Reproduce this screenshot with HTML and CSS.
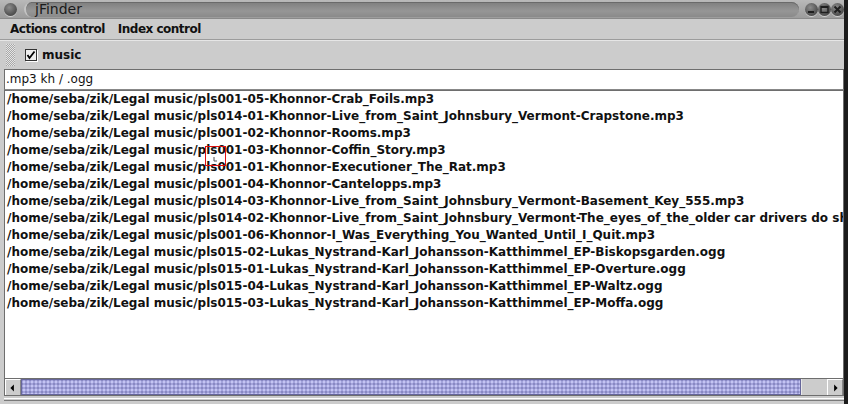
FILE: index.html
```html
<!DOCTYPE html>
<html>
<head>
<meta charset="utf-8">
<title>jFinder</title>
<link rel="stylesheet" href="styles.css">
</head>
<body>
<div class="window">
  <div class="titlebar">
    <span class="orb orb-menu"></span>
    <div class="title-pill"><span class="title-text">jFinder</span></div>
    <div class="controls">
      <span class="orb"><svg width="13" height="13" viewBox="0 0 13 13"><rect x="3" y="8" width="6" height="2" fill="#1e1e1e"/></svg></span>
      <span class="orb"><svg width="13" height="13" viewBox="0 0 13 13"><rect x="3" y="3.5" width="7" height="6" fill="none" stroke="#1e1e1e" stroke-width="1.4"/><rect x="3" y="3" width="7" height="2" fill="#1e1e1e"/></svg></span>
      <span class="orb"><svg width="13" height="13" viewBox="0 0 13 13"><path d="M3.5 3.5 L9.5 9.5 M9.5 3.5 L3.5 9.5" stroke="#1e1e1e" stroke-width="2"/></svg></span>
    </div>
  </div>
  <div class="menubar">
    <span class="menu-item">Actions control</span>
    <span class="menu-item">Index control</span>
  </div>
  <div class="toolbar">
    <span class="grip"></span>
    <label class="check">
      <span class="box"><svg width="10" height="10" viewBox="0 0 10 10"><path d="M1.5 5 L3.5 8 L8.5 1.5" fill="none" stroke="#000" stroke-width="1.8"/></svg></span>
      <span class="check-label">music</span>
    </label>
  </div>
  <div class="content">
    <div class="field">.mp3 kh / .ogg</div>
    <div class="listpane">
      <div class="list">
        <div class="row">/home/seba/zik/Legal music/pls001-05-Khonnor-Crab_Foils.mp3</div>
        <div class="row">/home/seba/zik/Legal music/pls014-01-Khonnor-Live_from_Saint_Johnsbury_Vermont-Crapstone.mp3</div>
        <div class="row">/home/seba/zik/Legal music/pls001-02-Khonnor-Rooms.mp3</div>
        <div class="row">/home/seba/zik/Legal music/pls001-03-Khonnor-Coffin_Story.mp3</div>
        <div class="row">/home/seba/zik/Legal music/pls001-01-Khonnor-Executioner_The_Rat.mp3</div>
        <div class="row">/home/seba/zik/Legal music/pls001-04-Khonnor-Cantelopps.mp3</div>
        <div class="row">/home/seba/zik/Legal music/pls014-03-Khonnor-Live_from_Saint_Johnsbury_Vermont-Basement_Key_555.mp3</div>
        <div class="row">/home/seba/zik/Legal music/pls014-02-Khonnor-Live_from_Saint_Johnsbury_Vermont-The_eyes_of_the_older car drivers do shine.mp3</div>
        <div class="row">/home/seba/zik/Legal music/pls001-06-Khonnor-I_Was_Everything_You_Wanted_Until_I_Quit.mp3</div>
        <div class="row">/home/seba/zik/Legal music/pls015-02-Lukas_Nystrand-Karl_Johansson-Katthimmel_EP-Biskopsgarden.ogg</div>
        <div class="row">/home/seba/zik/Legal music/pls015-01-Lukas_Nystrand-Karl_Johansson-Katthimmel_EP-Overture.ogg</div>
        <div class="row">/home/seba/zik/Legal music/pls015-04-Lukas_Nystrand-Karl_Johansson-Katthimmel_EP-Waltz.ogg</div>
        <div class="row">/home/seba/zik/Legal music/pls015-03-Lukas_Nystrand-Karl_Johansson-Katthimmel_EP-Moffa.ogg</div>
      </div>
      <div class="hscroll">
        <span class="sbtn"><svg width="16" height="16" viewBox="0 0 16 16"><path d="M5 8 L9 4 L9 12 Z" fill="#000"/></svg></span>
        <span class="thumb"></span>
        <span class="track"></span>
        <span class="sbtn"><svg width="16" height="16" viewBox="0 0 16 16"><path d="M11 8 L7 4 L7 12 Z" fill="#000"/></svg></span>
      </div>
    </div>
    <div class="bottom"></div>
  </div>
  <div class="highlight"><svg width="6" height="6" viewBox="0 0 6 6"><path d="M1 0 L1 4 L4 4" fill="none" stroke="#555" stroke-width="1"/></svg></div>
</div>
</body>
</html>
```
FILE: styles.css
```css
* { box-sizing: border-box; }
html, body { margin: 0; padding: 0; }
body {
  width: 848px;
  height: 404px;
  overflow: hidden;
  background: #cccccc;
  font-family: "DejaVu Sans", "Liberation Sans", sans-serif;
}
.window {
  position: relative;
  width: 848px;
  height: 404px;
  display: flex;
  flex-direction: column;
  background: #cccccc;
  border-right: 4px solid #1c1c1c;
}
.titlebar {
  height: 19px;
  display: flex;
  align-items: center;
  padding: 0 0 0 4px;
  background: linear-gradient(#b9b9b9, #9c9c9c);
  border-bottom: 1px solid #8a8a8a;
  flex: none;
}
.orb {
  width: 13px;
  height: 13px;
  border-radius: 50%;
  background: radial-gradient(circle at 40% 35%, #8c8c8c, #555 60%, #3a3a3a);
  box-shadow: 0 1px 0 #d0d0d0;
  display: inline-flex;
  flex: none;
}
.orb-menu { margin-right: 7px; }
.title-pill {
  flex: 1;
  height: 15px;
  border-radius: 8px;
  background: linear-gradient(#7e7e7e, #969696 60%, #8a8a8a);
  border-left: 2px solid #c4c4c4;
  box-shadow: inset 0 1px 0 #6a6a6a;
  display: flex;
  align-items: center;
  padding-left: 9px;
}
.title-text {
  font-size: 14px;
  color: #1a1a1a;
  line-height: 15px;
}
.controls {
  display: flex;
  padding: 0 0 0 6px;
}
.menubar {
  height: 21px;
  flex: none;
  display: flex;
  align-items: center;
  gap: 13px;
  padding-left: 10px;
  border-bottom: 1px solid #9c9c9c;
  font-weight: bold;
  font-size: 12px;
  letter-spacing: -0.5px;
  color: #111;
}
.toolbar {
  height: 29px;
  flex: none;
  display: flex;
  align-items: center;
  padding-left: 6px;
  border-top: 1px solid #e6e6e6;
}
.grip {
  width: 9px;
  height: 22px;
  background-image: conic-gradient(#a8a8a8 25%, #e4e4e4 0 50%, #a8a8a8 0 75%, #e4e4e4 0);
  background-size: 2px 2px;
  margin-right: 10px;
}
.check {
  display: flex;
  align-items: center;
  gap: 5px;
}
.box {
  width: 12px;
  height: 12px;
  background: #eeeeee;
  border: 1px solid #333;
  box-shadow: 1px 1px 0 #ffffff;
  display: flex;
  align-items: center;
  justify-content: center;
}
.check-label {
  font-weight: bold;
  font-size: 12px;
  color: #111;
}
.content {
  flex: 1;
  display: flex;
  flex-direction: column;
  padding: 0 0 0 4px;
  min-height: 0;
}
.field {
  height: 21px;
  flex: none;
  background: #ffffff;
  border: 1px solid #6e6e6e;
  border-bottom-color: #888;
  padding-left: 1px;
  font-size: 12px;
  line-height: 18px;
  color: #111;
  white-space: nowrap;
}
.listpane {
  flex: 1;
  display: flex;
  flex-direction: column;
  border: 1px solid #6e6e6e;
  min-height: 0;
}
.list {
  flex: 1;
  background: #ffffff;
  overflow: hidden;
  padding-left: 2px;
}
.row {
  height: 17px;
  line-height: 17px;
  font-weight: bold;
  font-size: 12px;
  color: #111;
  white-space: nowrap;
}
.hscroll {
  height: 17px;
  flex: none;
  display: flex;
  border-top: 1px solid #6e6e6e;
  background: #cccccc;
}
.sbtn {
  width: 16px;
  height: 16px;
  flex: none;
  background: #cccccc;
  border-top: 1px solid #ffffff;
  border-left: 1px solid #ffffff;
  border-right: 1px solid #888;
  display: flex;
  align-items: center;
  justify-content: center;
}
.thumb {
  width: 780px;
  flex: none;
  border: 1px solid #66669a;
  background-color: #a4a4dc;
  background-image:
    radial-gradient(circle, #d6d6ff 0.6px, transparent 0.9px),
    radial-gradient(circle, #7878b4 0.6px, transparent 0.9px);
  background-size: 4px 4px, 4px 4px;
  background-position: 0 0, 2px 2px;
}
.track {
  flex: 1;
  background: #cccccc;
  border-left: 1px solid #e8e8e8;
}
.bottom {
  height: 8px;
  flex: none;
  border-top: 2px solid #cccccc;
  background: linear-gradient(#ffffff 0 1px, #cccccc 1px 2px, #7a7a7a 2px 3px, #cccccc 3px);
}
.highlight {
  position: absolute;
  left: 205px;
  top: 146px;
  width: 21px;
  height: 20px;
  border: 1px solid #e01010;
  display: flex;
  align-items: flex-end;
  justify-content: center;
  padding-bottom: 2px;
}
```
